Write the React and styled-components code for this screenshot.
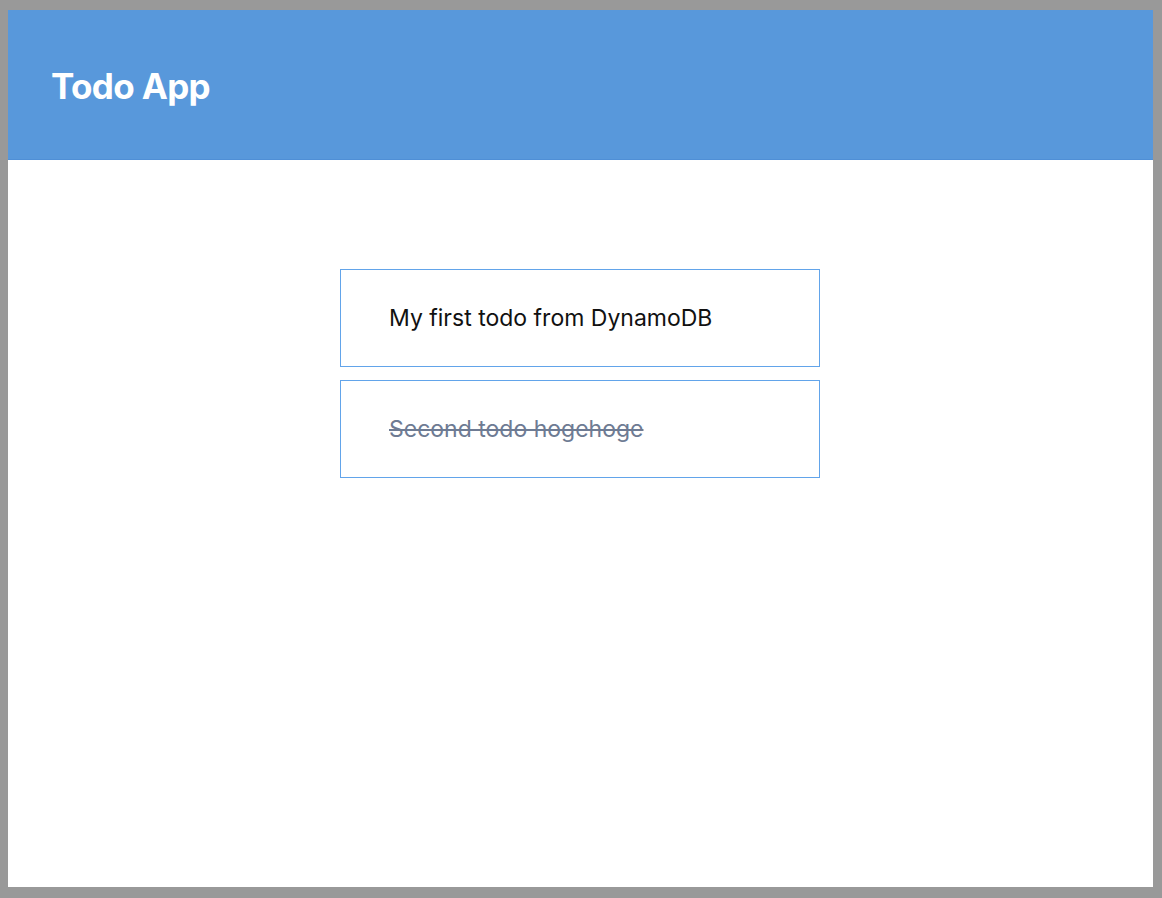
import React from "react";
import styled, { createGlobalStyle } from "styled-components";

const GlobalStyle = createGlobalStyle`
  html, body {
    margin: 0;
    padding: 0;
    background: #999999;
  }
  body {
    font-family: Inter, "Noto Sans", sans-serif;
  }
`;

const Frame = styled.div`
  box-sizing: border-box;
  height: 898px;
  padding: 10px 9px 11px 8px;
`;

const Page = styled.div`
  height: 100%;
  background: #ffffff;
  display: flex;
  flex-direction: column;
`;

const Header = styled.header`
  box-sizing: border-box;
  height: 150px;
  padding: 2px 0 0 43px;
  background: #5898db;
  border-bottom: 1px solid #4f8fd6;
  display: flex;
  align-items: center;
`;

const Title = styled.h1`
  margin: 0;
  color: #ffffff;
  font-size: 35px;
  font-weight: 700;
  letter-spacing: -0.65px;
`;

const List = styled.ul`
  list-style: none;
  margin: 109px 0 0 332px;
  padding: 0;
  width: 480px;
  display: flex;
  flex-direction: column;
  gap: 13px;
`;

const Item = styled.li`
  box-sizing: border-box;
  height: 98px;
  border: 1px solid #62a4ea;
  display: flex;
  align-items: center;
  padding-left: 48px;
  font-size: 23px;
  color: ${(p) => (p.done ? "#6e7b93" : "#111111")};
  text-decoration: ${(p) => (p.done ? "line-through" : "none")};
`;

const todos = [
  { id: 1, text: "My first todo from DynamoDB", done: false },
  { id: 2, text: "Second todo hogehoge", done: true },
];

export default function App() {
  return (
    <>
      <GlobalStyle />
      <Frame>
        <Page>
          <Header>
            <Title>Todo App</Title>
          </Header>
          <List>
            {todos.map((t) => (
              <Item key={t.id} done={t.done}>
                {t.text}
              </Item>
            ))}
          </List>
        </Page>
      </Frame>
    </>
  );
}
